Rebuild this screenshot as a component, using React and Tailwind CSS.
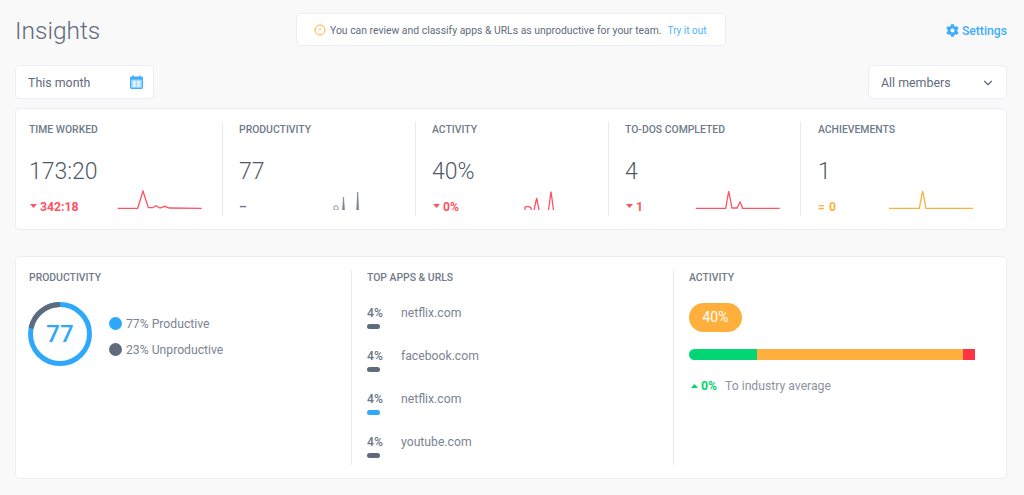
import { Info, ChevronDown } from 'lucide-react'
import { FaCog } from 'react-icons/fa'

const RED = '#ff5263'
const ORANGE = '#ffb03c'

const STATS = [
  {
    label: 'Time worked', value: '173:20', delta: '342:18', color: RED, caret: 'down', width: 'w-[207px] pl-[13px]',
    line: '0.7,18.3 20.7,18.3 26,1 31.3,17.7 35.7,17.7 39,15.7 43,18 47.7,16.3 52.3,18 84.7,18.3',
  },
  {
    label: 'Productivity', value: '77', delta: '–', color: '#6b7686', caret: null, width: 'w-[193px] pl-4',
    bars: true,
  },
  {
    label: 'Activity', value: '40%', delta: '0%', color: RED, caret: 'down', width: 'w-[193px] pl-4',
    line: '22,20 22,17 24,16.6 26,16.6 28,18 28.5,20 M31,20 33.7,8 36,20 M45.5,20 48,1.7 50.5,20',
  },
  {
    label: 'To-dos completed', value: '4', delta: '1', color: RED, caret: 'down', width: 'w-[192px] pl-4',
    line: '0.7,18.3 30.7,18.3 33.7,1 37,18 42,18 45,12 47.7,18.3 84.7,18.3',
  },
  {
    label: 'Achievements', value: '1', delta: '0', color: ORANGE, caret: 'equal', width: 'flex-1 pl-[17px]',
    line: '0,18.3 30.3,18.3 33.7,1 37,18.3 84,18.3',
    last: true,
  },
]

const APPS = [
  { name: 'netflix.com', color: 'bg-[#5f6b7c]' },
  { name: 'facebook.com', color: 'bg-[#5f6b7c]' },
  { name: 'netflix.com', color: 'bg-[#2ea8fb]' },
  { name: 'youtube.com', color: 'bg-[#5f6b7c]' },
]

function Sparkline({ stat }) {
  if (stat.bars) {
    return (
      <svg width="85" height="20" viewBox="0 0 85 20" className="shrink-0 self-start">
        <path d="M24 20V16.5L25 15.8H27L28 17V20Z" fill="none" stroke="#8a94a3" strokeWidth="1" />
        <path d="M32.6 20L33.5 7L34.4 20Z" fill="#7b8695" stroke="#7b8695" strokeWidth="0.8" />
        <path d="M46.8 20L47.7 2L48.6 20Z" fill="#7b8695" stroke="#7b8695" strokeWidth="0.8" />
      </svg>
    )
  }
  const d = 'M' + stat.line.replace(/ (?!M)/g, ' L').replace(/ LM/g, ' M')
  return (
    <svg width="85" height="20" viewBox="0 0 85 20" className="shrink-0 self-start">
      <path d={d} fill="none" stroke={stat.color} strokeWidth="1.3" />
    </svg>
  )
}

function Caret({ type, color }) {
  if (type === 'equal') return <span className="mr-1 text-[12px]" style={{ color }}>=</span>
  if (!type) return null
  return (
    <svg width="7" height="4" viewBox="0 0 7 4" className={type === 'up' ? 'ml-[2px] mr-[3px] rotate-180' : 'ml-px mr-[3px] mb-[3px]'}>
      <path d="M0 0H7L3.5 4Z" fill={color} />
    </svg>
  )
}

function SectionLabel({ children }) {
  return <div className="pt-px text-[10.4px] font-medium uppercase leading-[14px] text-[#6f7a8a]">{children}</div>
}

export default function App() {
  return (
    <div className="min-h-screen h-[495px] overflow-hidden bg-[#f9f9fa] pl-[15px] pr-[17px] font-['Roboto',sans-serif] text-[#5f6b7c]">
      <div className="flex items-center pt-[13px] h-[46px]">
        <h1 className="mt-px w-[281px] text-[24.5px] font-light leading-[33px] text-[#5f6b7c]">Insights</h1>
        <div className="flex h-[33px] w-[430px] items-center rounded-[5px] border border-[#ebeef2] bg-white pl-[18px] pt-[2px] text-[10.4px] text-[#5f6b7c]">
          <Info size={12} color={ORANGE} className="mb-[2px] mr-[4px] -ml-px rotate-180" />
          <span>You can review and classify apps &amp; URLs as unproductive for your team.</span>
          <span className="ml-[6px] text-[10px] text-[#4cb3fb]">Try it out</span>
        </div>
        <div className="ml-auto mt-[3px] flex items-center gap-[3px] text-[12.2px] font-medium text-[#3fadfb]">
          <FaCog size={13} />
          <span>Settings</span>
        </div>
      </div>

      <div className="mt-[19px] flex justify-between">
        <div className="flex h-[34px] w-[139px] items-center justify-between rounded-[5px] border border-[#ebeef2] bg-white pl-3 pr-[10px] text-[12.4px]">
          <span className="pt-[3px]">This month</span>
          <svg width="13" height="14" viewBox="0 0 13 14">
            <path d="M3 0.5V2.5M10 0.5V2.5" stroke="#3fadfb" strokeWidth="1.4" />
            <rect x="0.6" y="2" width="11.8" height="11.4" rx="1" fill="#a9dcfd" stroke="#3fadfb" strokeWidth="1.2" />
            <rect x="0.6" y="2" width="11.8" height="2.6" fill="#3fadfb" />
            <path d="M3.2 6.5h2.4v2h-2.4zM7.4 6.5h2.4v2h-2.4zM3.2 9.6h2.4v2h-2.4zM7.4 9.6h2.4v2h-2.4z" fill="#fff" />
          </svg>
        </div>
        <div className="flex h-[34px] w-[139px] items-center justify-between rounded-[5px] border border-[#ebeef2] bg-white pl-3 pr-[11px] text-[12.4px]">
          <span className="pt-[3px]">All members</span>
          <ChevronDown size={14} color="#5f6b7c" className="mt-px" />
        </div>
      </div>

      <div className="mt-[9px] flex h-[122px] rounded-[5px] border border-[#ebeef2] bg-white py-[13px]">
        {STATS.map(stat => (
          <div key={stat.label} className={`flex flex-col ${stat.width} ${stat.last ? 'pr-8' : 'border-r border-[#e8ebf0] pr-5'}`}>
            <SectionLabel>{stat.label}</SectionLabel>
            <div className="mt-[21px] text-[23px] font-light leading-[28px] text-[#4f5a69]">{stat.value}</div>
            <div className="mt-[4px] flex h-[25px] items-end justify-between">
              <div className="flex items-center text-[12.2px] font-bold leading-[16px]" style={{ color: stat.color }}>
                <Caret type={stat.caret} color={stat.color} />
                <span>{stat.delta}</span>
              </div>
              <Sparkline stat={stat} />
            </div>
          </div>
        ))}
      </div>

      <div className="mt-[26px] flex h-[223px] rounded-[5px] border border-[#ebeef2] bg-white py-[13px]">
        <div className="w-[336px] border-r border-[#e8ebf0] pl-[13px]">
          <SectionLabel>Productivity</SectionLabel>
          <div className="-ml-px mt-[17px] flex items-center">
            <div className="relative h-[64px] w-[64px]">
              <svg width="64" height="64" viewBox="0 0 64 64">
                <circle cx="32" cy="32" r="29.5" fill="none" stroke="#2ea8fb" strokeWidth="5" />
                <path d="M32 2.5A29.5 29.5 0 0 0 3.1 26.2" fill="none" stroke="#5f6b7c" strokeWidth="5" />
              </svg>
              <span className="absolute inset-0 flex items-center justify-center text-[24px] font-medium text-[#2ea8fb]">77</span>
            </div>
            <div className="ml-[17px] mt-[5px] flex flex-col gap-[10px] text-[12.2px] leading-[16px] text-[#7a8494]">
              <div className="flex items-center gap-[4px]">
                <span className="h-[13px] w-[13px] rounded-full bg-[#2ea8fb]" />
                <span>77% Productive</span>
              </div>
              <div className="flex items-center gap-[4px]">
                <span className="h-[13px] w-[13px] rounded-full bg-[#5f6b7c]" />
                <span>23% Unproductive</span>
              </div>
            </div>
          </div>
        </div>

        <div className="w-[322px] border-r border-[#e8ebf0] pl-[15px]">
          <SectionLabel>Top apps &amp; URLs</SectionLabel>
          <div className="mt-[20px] flex flex-col gap-[22px]">
            {APPS.map((app, i) => (
              <div key={i} className="h-[21px]">
                <div className="flex items-center text-[12.2px] leading-[16px]">
                  <span className="w-[34px] font-medium text-[#6b7686]">4%</span>
                  <span className="text-[#7a8494]">{app.name}</span>
                </div>
                <div className={`mt-[3px] h-[5px] w-[13px] rounded-full ${app.color}`} />
              </div>
            ))}
          </div>
        </div>

        <div className="flex-1 pl-[15px]">
          <SectionLabel>Activity</SectionLabel>
          <div className="mt-[18px] flex h-[29px] w-[53px] items-center justify-center rounded-full bg-[#ffb03c] text-[14px] text-white">40%</div>
          <div className="mt-[17px] flex h-[11px] w-[286px] overflow-hidden rounded-l-full">
            <div className="w-[68px] bg-[#00d673]" />
            <div className="w-[206px] bg-[#ffb03c]" />
            <div className="w-[12px] bg-[#ff3344]" />
          </div>
          <div className="mt-[18px] flex items-center text-[12.2px] leading-[16px]">
            <Caret type="up" color="#00d673" />
            <span className="font-bold text-[#00d673]">0%</span>
            <span className="ml-[8px] text-[#8b94a1]">To industry average</span>
          </div>
        </div>
      </div>
    </div>
  )
}
